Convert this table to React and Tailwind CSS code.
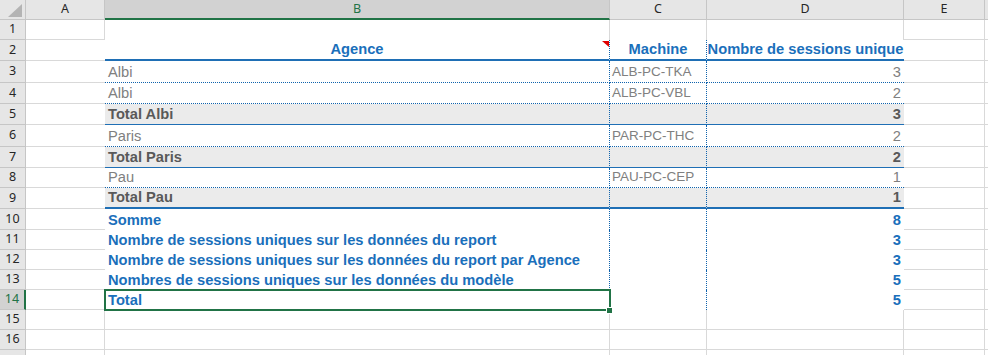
const COLS = ['A', 'B', 'C', 'D', 'E'];

const rows = [
  { n: 1, h: 'h-[20px]', kind: 'top' },
  { n: 2, h: 'h-[21px]', kind: 'head' },
  { n: 3, h: 'h-[22px]', kind: 'data', b: 'Albi', c: 'ALB-PC-TKA', d: '3', edge: 'dotted' },
  { n: 4, h: 'h-[21px]', kind: 'data', b: 'Albi', c: 'ALB-PC-VBL', d: '2', edge: 'dotted' },
  { n: 5, h: 'h-[21px]', kind: 'total', b: 'Total Albi', d: '3', edge: 'solid' },
  { n: 6, h: 'h-[22px]', kind: 'data', b: 'Paris', c: 'PAR-PC-THC', d: '2', edge: 'dotted' },
  { n: 7, h: 'h-[21px]', kind: 'total', b: 'Total Paris', d: '2', edge: 'solid' },
  { n: 8, h: 'h-[20px]', kind: 'data', b: 'Pau', c: 'PAU-PC-CEP', d: '1', edge: 'dotted' },
  { n: 9, h: 'h-[21px]', kind: 'total', b: 'Total Pau', d: '1', edge: 'thick' },
  { n: 10, h: 'h-[21px]', kind: 'sum', b: 'Somme', d: '8' },
  { n: 11, h: 'h-[20px]', kind: 'sum', b: 'Nombre de sessions uniques sur les données du report', d: '3' },
  { n: 12, h: 'h-[20px]', kind: 'sum', b: 'Nombre de sessions uniques sur les données du report par Agence', d: '3' },
  { n: 13, h: 'h-[20px]', kind: 'sum', b: 'Nombres de sessions uniques sur les données du modèle', d: '5' },
  { n: 14, h: 'h-[20px]', kind: 'sum', b: 'Total', d: '5', active: true },
  { n: 15, h: 'h-[20px]', kind: 'blank' },
  { n: 16, h: 'h-[20px]', kind: 'blank' },
  { n: 17, h: 'h-[20px]', kind: 'blank', clipped: true },
];

const edgeClass = {
  dotted: 'border-b [border-bottom-style:dotted] border-b-[#0f63ad]',
  solid: 'border-b [border-bottom-style:solid] border-b-[#1f6fb5]',
  thick: 'border-b-2 [border-bottom-style:solid] border-b-[#1f6fb5]',
};

// dotted separator between the table columns
const sep = 'border-r [border-right-style:dotted] border-r-[#0f63ad]';

function ColumnHeader() {
  return (
    <div className="flex h-[20px] font-['Noto_Sans',sans-serif] text-[12.5px] text-[#262626]">
      <div className="relative w-[26px] shrink-0 border-r border-b border-[#c6c6c6] bg-[#e6e6e6]">
        <svg className="absolute left-[8px] top-[4px]" width="14" height="13" viewBox="0 0 14 13">
          <path d="M14 0 L14 13 L0 13 Z" fill="#b4b4b4" />
        </svg>
      </div>
      {COLS.map((c) => {
        const width = { A: 'w-[79px]', B: 'w-[505px]', C: 'w-[97px]', D: 'w-[197px]', E: 'w-[81px]' }[c];
        if (c === 'B') {
          return (
            <div
              key={c}
              className={`${width} shrink-0 flex items-center justify-center border-r border-[#c6c6c6] border-b-2 border-b-[#217346] bg-[#d2d2d2] text-[#217346]`}
            >
              {c}
            </div>
          );
        }
        return (
          <div
            key={c}
            className={`${width} shrink-0 flex items-center justify-center border-r border-b border-[#c6c6c6] bg-[#e6e6e6]`}
          >
            {c}
          </div>
        );
      })}
      <div className="flex-1 border-b border-[#c6c6c6] bg-[#e6e6e6]" />
    </div>
  );
}

function RowNumber({ n, active, clipped }) {
  if (active) {
    return (
      <div className="w-[26px] shrink-0 flex items-center justify-center border-b border-b-[#c6c6c6] border-r-2 border-r-[#217346] bg-[#d2d2d2] text-[#217346] font-['Noto_Sans',sans-serif] text-[12.5px]">
        {n}
      </div>
    );
  }
  return (
    <div className="w-[26px] shrink-0 flex items-center justify-center border-r border-b border-[#c6c6c6] bg-[#e6e6e6] text-[#262626] font-['Noto_Sans',sans-serif] text-[12.5px]">
      {clipped ? null : n}
    </div>
  );
}

function TableCells({ row }) {
  const text = "flex items-end pb-[2px] leading-[16px] font-['Liberation_Sans',Arial,sans-serif]";
  const edge = edgeClass[row.edge] || '';

  if (row.kind === 'head') {
    const line = 'border-b-2 [border-bottom-style:solid] border-b-[#1f6fb5]';
    return (
      <>
        <div className={`relative w-[505px] shrink-0 justify-center ${sep} ${line} ${text} text-[14.7px] font-bold text-[#1a6fbb]`}>
          Agence
          <svg className="absolute right-0 top-[1px]" width="7" height="6" viewBox="0 0 7 6">
            <path d="M0 0 L7 0 L7 6 Z" fill="#e00000" />
          </svg>
        </div>
        <div className={`w-[97px] shrink-0 justify-center ${sep} ${line} ${text} text-[14.7px] font-bold text-[#1a6fbb]`}>
          Machine
        </div>
        <div className={`w-[197px] shrink-0 justify-center whitespace-nowrap ${line} ${text} text-[14.7px] font-bold text-[#1a6fbb]`}>
          Nombre de sessions unique
        </div>
      </>
    );
  }

  if (row.kind === 'data') {
    return (
      <>
        <div className={`w-[505px] shrink-0 pl-[3px] ${sep} ${edge} ${text} text-[14.7px] text-[#808080]`}>
          {row.b}
        </div>
        <div className={`w-[97px] shrink-0 pl-[2px] whitespace-nowrap ${sep} ${edge} ${text} text-[13.5px] text-[#808080]`}>
          {row.c}
        </div>
        <div className={`w-[197px] shrink-0 justify-end pr-[3px] ${edge} ${text} text-[14.7px] text-[#808080]`}>
          {row.d}
        </div>
      </>
    );
  }

  if (row.kind === 'total') {
    return (
      <>
        <div className={`w-[505px] shrink-0 pl-[3px] bg-[#ebebeb] ${sep} ${edge} ${text} text-[14.7px] font-bold text-[#595959]`}>
          {row.b}
        </div>
        <div className={`w-[97px] shrink-0 bg-[#ebebeb] ${sep} ${edge}`} />
        <div className={`w-[197px] shrink-0 justify-end pr-[3px] bg-[#ebebeb] ${edge} ${text} text-[14.7px] font-bold text-[#595959]`}>
          {row.d}
        </div>
      </>
    );
  }

  // summary lines under the table
  return (
    <>
      <div className={`relative w-[505px] shrink-0 pl-[3px] whitespace-nowrap ${sep} ${text} text-[14.7px] font-bold text-[#1a6fbb]`}>
        {row.b}
        {row.active && (
          <>
            <div className="pointer-events-none absolute -left-[1px] -top-[1px] -right-[2px] -bottom-[1px] border-2 border-[#217346]" />
            <div className="absolute -right-[4px] -bottom-[4px] h-[7px] w-[7px] border border-white bg-[#217346]" />
          </>
        )}
      </div>
      <div className={`w-[97px] shrink-0 ${sep}`} />
      <div className={`w-[197px] shrink-0 justify-end pr-[3px] ${text} text-[14.7px] font-bold text-[#1a6fbb]`}>
        {row.d}
      </div>
    </>
  );
}

function Row({ row }) {
  const grid = 'border-[#d9d9d9]';
  const inTable = row.kind !== 'top' && row.kind !== 'blank';

  return (
    <div className={`flex ${row.h}`}>
      <RowNumber n={row.n} active={row.active} clipped={row.clipped} />
      <div className={`w-[79px] shrink-0 border-b ${grid} ${inTable ? '' : 'border-r'}`} />
      {inTable ? (
        <TableCells row={row} />
      ) : (
        <>
          <div className={`w-[505px] shrink-0 border-r ${grid} ${row.kind === 'top' ? '' : 'border-b'}`} />
          <div className={`w-[97px] shrink-0 border-r ${grid} ${row.kind === 'top' ? '' : 'border-b'}`} />
          <div className={`w-[197px] shrink-0 border-r ${grid} ${row.kind === 'top' ? '' : 'border-b'}`} />
        </>
      )}
      <div className={`w-[81px] shrink-0 border-r border-b ${grid}`} />
      <div className={`flex-1 border-b ${grid}`} />
    </div>
  );
}

export default function App() {
  return (
    <div className="h-[355px] w-[988px] overflow-hidden bg-white">
      <ColumnHeader />
      {rows.map((row) => (
        <Row key={row.n} row={row} />
      ))}
    </div>
  );
}
